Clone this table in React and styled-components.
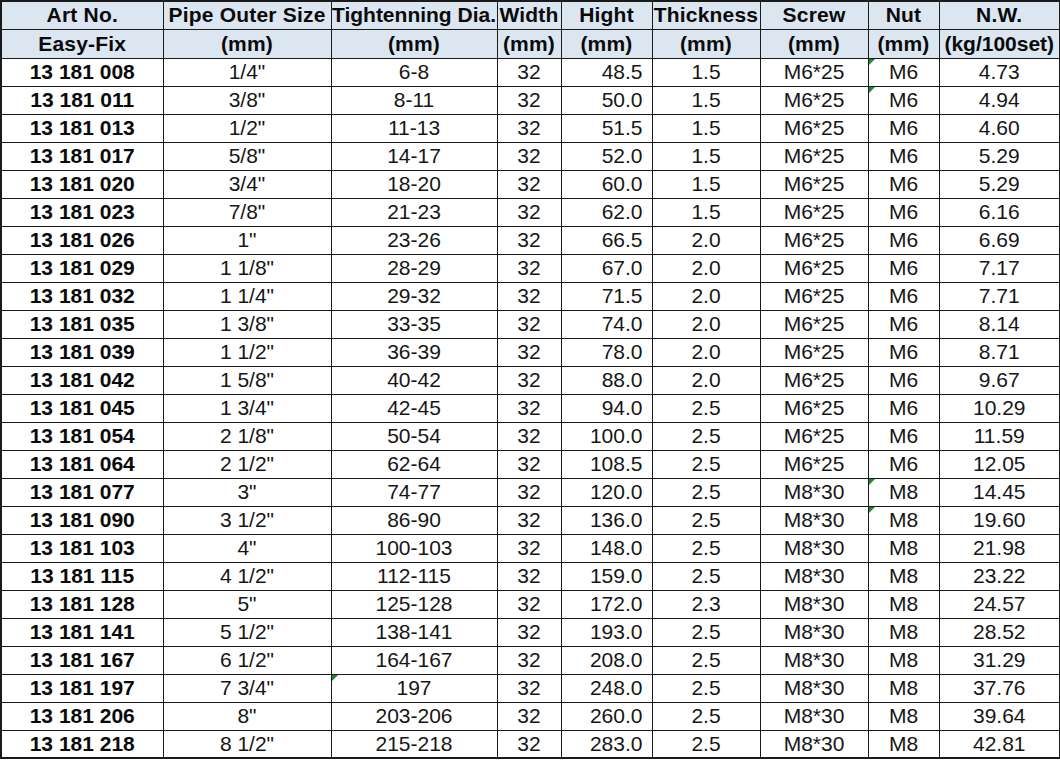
import React from "react";
import styled, { createGlobalStyle } from "styled-components";

const GlobalStyle = createGlobalStyle`
  html, body { margin: 0; padding: 0; background: #ffffff; }
  body { font-family: "Liberation Sans", Arial, sans-serif; }
`;

const Sheet = styled.table`
  width: 1060px;
  table-layout: fixed;
  border-collapse: collapse;
  border: 2px solid #1a1a1a;
  font-family: "Liberation Sans", Arial, sans-serif;
  font-size: 21px;
  color: #141414;
`;

const HeadRow = styled.tr`
  height: ${(p) => p.$h}px;
  background: #dce6f1;
`;

const HeadCell = styled.th`
  position: relative;
  border: 1px solid #1a1a1a;
  padding: 0;
  font-weight: 700;
  color: #0a0a0a;
  text-align: center;
  white-space: nowrap;
  overflow: visible;
  line-height: 22px;
  letter-spacing: ${(p) => (p.$tight ? "0px" : "0.2px")};
`;

const BodyRow = styled.tr`
  height: 28px;
`;

const Cell = styled.td`
  position: relative;
  border: 1px solid #1a1a1a;
  padding: ${(p) => (p.$align === "right" ? "0 9px 0 0" : "0")};
  text-align: ${(p) => p.$align || "center"};
  font-weight: ${(p) => (p.$bold ? 700 : 400)};
  color: ${(p) => (p.$bold ? "#0a0a0a" : "#161616")};
  white-space: nowrap;
  line-height: 22px;
`;

const Flag = styled.span`
  position: absolute;
  left: 0;
  top: 0;
  width: 0;
  height: 0;
  border-top: 6px solid #1d8a2a;
  border-right: 6px solid transparent;
`;

const cols = [162, 168, 166, 64, 91, 108, 108, 71, 121];

const head1 = ["Art No.", "Pipe Outer Size", "Tightenning Dia.", "Width", "Hight", "Thickness", "Screw", "Nut", "N.W."];
const head2 = ["Easy-Fix", "(mm)", "(mm)", "(mm)", "(mm)", "(mm)", "(mm)", "(mm)", "(kg/100set)"];

const rows = [
  ["13 181 008", '1/4"', "6-8", "48.5", "1.5", "M6*25", "M6", "4.73", { nut: true }],
  ["13 181 011", '3/8"', "8-11", "50.0", "1.5", "M6*25", "M6", "4.94", { nut: true }],
  ["13 181 013", '1/2"', "11-13", "51.5", "1.5", "M6*25", "M6", "4.60"],
  ["13 181 017", '5/8"', "14-17", "52.0", "1.5", "M6*25", "M6", "5.29"],
  ["13 181 020", '3/4"', "18-20", "60.0", "1.5", "M6*25", "M6", "5.29"],
  ["13 181 023", '7/8"', "21-23", "62.0", "1.5", "M6*25", "M6", "6.16"],
  ["13 181 026", '1"', "23-26", "66.5", "2.0", "M6*25", "M6", "6.69"],
  ["13 181 029", '1 1/8"', "28-29", "67.0", "2.0", "M6*25", "M6", "7.17"],
  ["13 181 032", '1 1/4"', "29-32", "71.5", "2.0", "M6*25", "M6", "7.71"],
  ["13 181 035", '1 3/8"', "33-35", "74.0", "2.0", "M6*25", "M6", "8.14"],
  ["13 181 039", '1 1/2"', "36-39", "78.0", "2.0", "M6*25", "M6", "8.71"],
  ["13 181 042", '1 5/8"', "40-42", "88.0", "2.0", "M6*25", "M6", "9.67"],
  ["13 181 045", '1 3/4"', "42-45", "94.0", "2.5", "M6*25", "M6", "10.29"],
  ["13 181 054", '2 1/8"', "50-54", "100.0", "2.5", "M6*25", "M6", "11.59"],
  ["13 181 064", '2 1/2"', "62-64", "108.5", "2.5", "M6*25", "M6", "12.05"],
  ["13 181 077", '3"', "74-77", "120.0", "2.5", "M8*30", "M8", "14.45", { nut: true }],
  ["13 181 090", '3 1/2"', "86-90", "136.0", "2.5", "M8*30", "M8", "19.60", { nut: true }],
  ["13 181 103", '4"', "100-103", "148.0", "2.5", "M8*30", "M8", "21.98"],
  ["13 181 115", '4 1/2"', "112-115", "159.0", "2.5", "M8*30", "M8", "23.22"],
  ["13 181 128", '5"', "125-128", "172.0", "2.3", "M8*30", "M8", "24.57"],
  ["13 181 141", '5 1/2"', "138-141", "193.0", "2.5", "M8*30", "M8", "28.52"],
  ["13 181 167", '6 1/2"', "164-167", "208.0", "2.5", "M8*30", "M8", "31.29"],
  ["13 181 197", '7 3/4"', "197", "248.0", "2.5", "M8*30", "M8", "37.76", { dia: true }],
  ["13 181 206", '8"', "203-206", "260.0", "2.5", "M8*30", "M8", "39.64"],
  ["13 181 218", '8 1/2"', "215-218", "283.0", "2.5", "M8*30", "M8", "42.81"],
];

export default function App() {
  return (
    <>
      <GlobalStyle />
      <Sheet>
        <colgroup>
          {cols.map((w, i) => (
            <col key={i} style={{ width: w }} />
          ))}
        </colgroup>
        <thead>
          <HeadRow $h={28}>
            {head1.map((h, i) => (
              <HeadCell key={i} $tight={i === 2}>
                {h}
              </HeadCell>
            ))}
          </HeadRow>
          <HeadRow $h={29}>
            {head2.map((h, i) => (
              <HeadCell key={i} $tight={i === 8}>
                {h}
              </HeadCell>
            ))}
          </HeadRow>
        </thead>
        <tbody>
          {rows.map((r) => {
            const flags = r[8] || {};
            return (
              <BodyRow key={r[0]}>
                <Cell $bold>{r[0]}</Cell>
                <Cell>{r[1]}</Cell>
                <Cell>
                  {flags.dia && <Flag />}
                  {r[2]}
                </Cell>
                <Cell>32</Cell>
                <Cell $align="right">{r[3]}</Cell>
                <Cell>{r[4]}</Cell>
                <Cell>{r[5]}</Cell>
                <Cell>
                  {flags.nut && <Flag />}
                  {r[6]}
                </Cell>
                <Cell>{r[7]}</Cell>
              </BodyRow>
            );
          })}
        </tbody>
      </Sheet>
    </>
  );
}
